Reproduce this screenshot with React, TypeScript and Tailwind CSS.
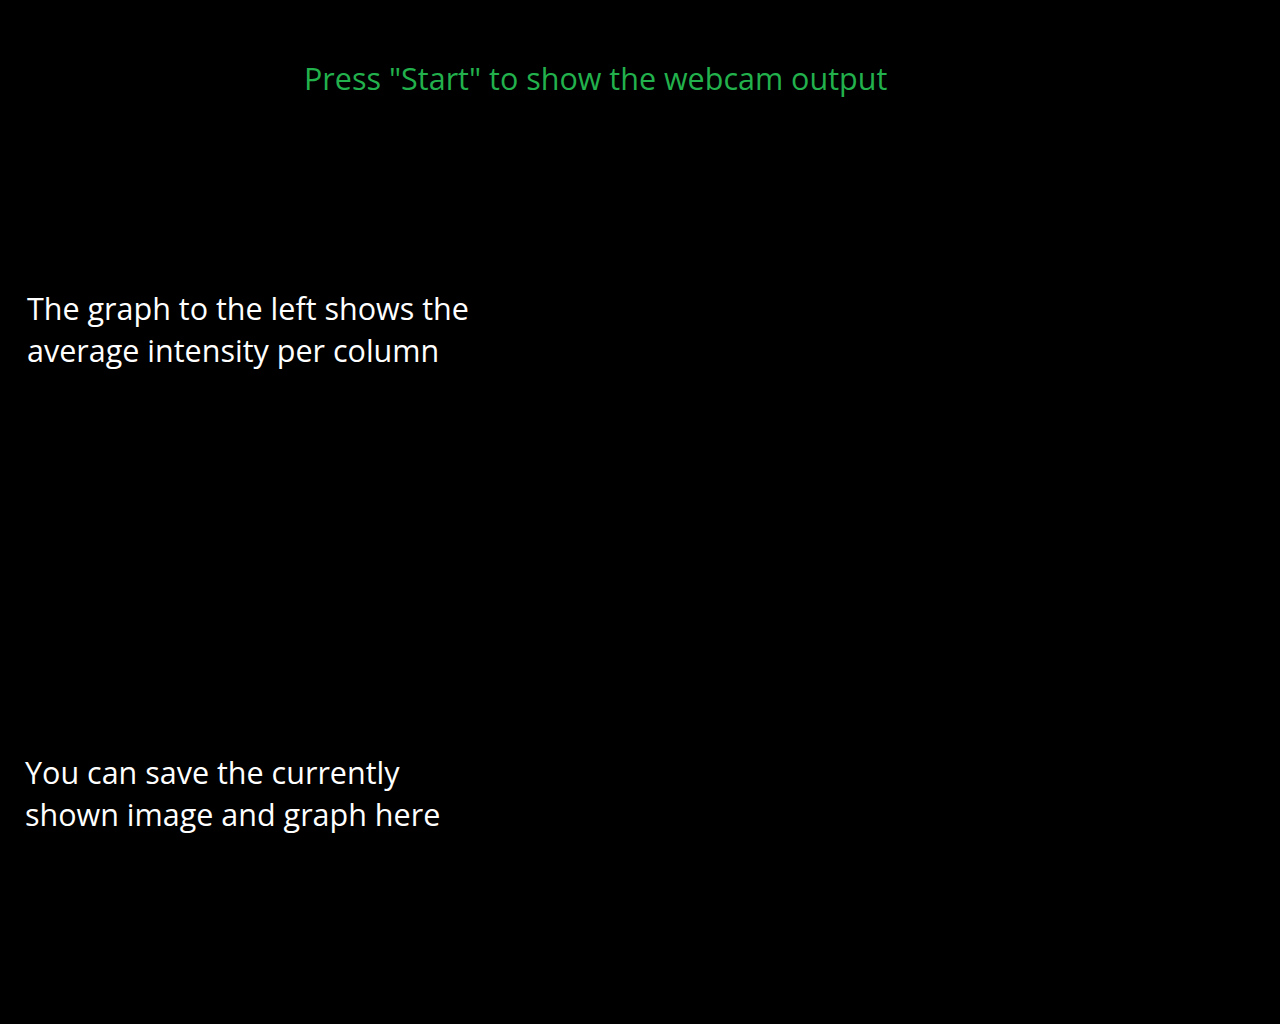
import React from "react";

const App: React.FC = () => {
  return (
    <div className="min-h-screen w-full bg-black font-['Open_Sans',sans-serif] text-[30.5px] leading-[42px]">
      <div className="flex flex-col pt-[57px]">
        <p className="ml-[304px] text-[#22b14c]">Press "Start" to show the webcam output</p>
        <p className="ml-[27px] mt-[188px] text-white">
          The graph to the left shows the
          <br />
          average intensity per column
        </p>
        <p className="ml-[25px] mt-[380px] text-white">
          You can save the currently
          <br />
          shown image and graph here
        </p>
      </div>
    </div>
  );
};

export default App;
